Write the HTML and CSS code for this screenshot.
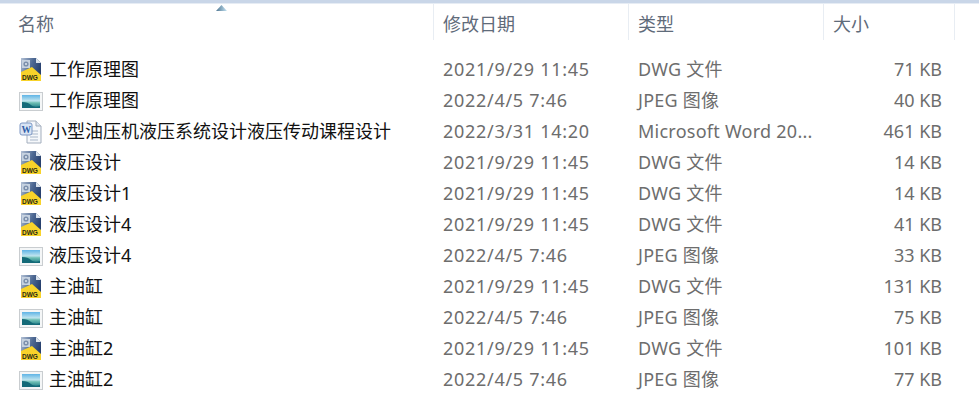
FILE: index.html
```html
<!DOCTYPE html>
<html lang="zh-CN">
<head>
  <meta charset="UTF-8" />
  <title>文件列表</title>
  <link rel="stylesheet" href="styles.css">
</head>
<body>
  <svg class="defs" width="0" height="0" aria-hidden="true">
    <defs>
      <linearGradient id="sky" x1="0" y1="0" x2="0" y2="1">
        <stop offset="0" stop-color="#5fb4e6"/>
        <stop offset="0.45" stop-color="#bfe4ee"/>
        <stop offset="0.6" stop-color="#6fc0b4"/>
        <stop offset="1" stop-color="#1c7a86"/>
      </linearGradient>
      <linearGradient id="steel" x1="0" y1="0" x2="1" y2="0.4">
        <stop offset="0" stop-color="#b4c2d6"/>
        <stop offset="0.55" stop-color="#4f6a94"/>
        <stop offset="1" stop-color="#27406e"/>
      </linearGradient>
      <linearGradient id="arrow" x1="0" y1="0" x2="1" y2="0">
        <stop offset="0" stop-color="#4e7590"/>
        <stop offset="1" stop-color="#c4e2f2"/>
      </linearGradient>
      <symbol id="dwg" viewBox="0 0 24 24">
        <path d="M2 0h15l5 5v18H2z" fill="url(#steel)"/>
        <path d="M17 0l5 5h-5z" fill="#dbe3ec"/>
        <rect x="3" y="2" width="8" height="8" fill="#c6d2e0"/>
        <circle cx="7" cy="6" r="2.6" fill="#7c90ac"/>
        <circle cx="7" cy="6" r="1" fill="#e1e8f0"/>
        <path d="M2 14l11-5 9 8v6H2z" fill="#f8d32a"/>
        <text x="3" y="22" class="dwg-label">DWG</text>
      </symbol>
      <symbol id="jpg" viewBox="0 0 24 24">
        <rect x="0.5" y="3.5" width="23" height="18" fill="#f4f6f7" stroke="#c9cdd0"/>
        <rect x="3" y="6" width="18" height="13" fill="url(#sky)"/>
        <path d="M3 13c4 0 7 1 9 3s6 2 9 1v2H3z" fill="#146a78"/>
      </symbol>
      <symbol id="doc" viewBox="0 0 24 24">
        <path d="M8 1h9l5 5v17H8z" fill="#f6f8fb" stroke="#a3aebd"/>
        <path d="M17 1v5h5" fill="#dfe6ef" stroke="#a3aebd"/>
        <path d="M11 11h8M11 14h8M11 17h8M11 20h8" stroke="#a9b7ca" stroke-width="1"/>
        <rect x="1" y="3" width="12" height="12" rx="2" fill="#d9e4f4" stroke="#7c97c4"/>
        <text x="2.4" y="12.5" class="doc-label">W</text>
      </symbol>
    </defs>
  </svg>

  <div class="explorer">
    <div class="topband"></div>

    <div class="head">
      <div class="col col-name">名称<svg class="sort" width="11" height="6"><path d="M5.5 0L11 6H0z" fill="url(#arrow)"/></svg></div>
      <div class="col col-date">修改日期</div>
      <div class="col col-type">类型</div>
      <div class="col col-size">大小</div>
      <div class="col col-rest"></div>
    </div>

    <div class="rows">
      <div class="row">
        <div class="name"><svg class="icon"><use href="#dwg"/></svg>工作原理图</div>
        <div class="date">2021/9/29 11:45</div><div class="type">DWG 文件</div><div class="size">71 KB</div>
      </div>
      <div class="row">
        <div class="name"><svg class="icon"><use href="#jpg"/></svg>工作原理图</div>
        <div class="date">2022/4/5 7:46</div><div class="type">JPEG 图像</div><div class="size">40 KB</div>
      </div>
      <div class="row">
        <div class="name"><svg class="icon"><use href="#doc"/></svg>小型油压机液压系统设计液压传动课程设计</div>
        <div class="date">2022/3/31 14:20</div><div class="type">Microsoft Word 20...</div><div class="size">461 KB</div>
      </div>
      <div class="row">
        <div class="name"><svg class="icon"><use href="#dwg"/></svg>液压设计</div>
        <div class="date">2021/9/29 11:45</div><div class="type">DWG 文件</div><div class="size">14 KB</div>
      </div>
      <div class="row">
        <div class="name"><svg class="icon"><use href="#dwg"/></svg>液压设计1</div>
        <div class="date">2021/9/29 11:45</div><div class="type">DWG 文件</div><div class="size">14 KB</div>
      </div>
      <div class="row">
        <div class="name"><svg class="icon"><use href="#dwg"/></svg>液压设计4</div>
        <div class="date">2021/9/29 11:45</div><div class="type">DWG 文件</div><div class="size">41 KB</div>
      </div>
      <div class="row">
        <div class="name"><svg class="icon"><use href="#jpg"/></svg>液压设计4</div>
        <div class="date">2022/4/5 7:46</div><div class="type">JPEG 图像</div><div class="size">33 KB</div>
      </div>
      <div class="row">
        <div class="name"><svg class="icon"><use href="#dwg"/></svg>主油缸</div>
        <div class="date">2021/9/29 11:45</div><div class="type">DWG 文件</div><div class="size">131 KB</div>
      </div>
      <div class="row">
        <div class="name"><svg class="icon"><use href="#jpg"/></svg>主油缸</div>
        <div class="date">2022/4/5 7:46</div><div class="type">JPEG 图像</div><div class="size">75 KB</div>
      </div>
      <div class="row">
        <div class="name"><svg class="icon"><use href="#dwg"/></svg>主油缸2</div>
        <div class="date">2021/9/29 11:45</div><div class="type">DWG 文件</div><div class="size">101 KB</div>
      </div>
      <div class="row">
        <div class="name"><svg class="icon"><use href="#jpg"/></svg>主油缸2</div>
        <div class="date">2022/4/5 7:46</div><div class="type">JPEG 图像</div><div class="size">77 KB</div>
      </div>
    </div>
  </div>
</body>
</html>
```

FILE: styles.css
```css
html, body {
  margin: 0;
  padding: 0;
  height: 100%;
  overflow: hidden;
  background: #fff;
}

body {
  font-family: "Noto Sans", "Noto Sans CJK SC", sans-serif;
  font-size: 18px;
  color: #6d6d6d;
}

.defs {
  display: block;
  height: 0;
}

.dwg-label {
  font-family: "Liberation Sans", sans-serif;
  font-size: 6.5px;
  font-weight: bold;
  fill: #2a2a14;
}

.doc-label {
  font-family: "Liberation Serif", serif;
  font-size: 9.5px;
  font-weight: bold;
  fill: #2f5ea8;
}

.topband {
  height: 4px;
  background: #c9d6e8;
  border-bottom: 1px solid #e6ecf4;
  box-sizing: border-box;
}

.head {
  display: grid;
  grid-template-columns: 434px 195px 195px 131px 1fr;
  height: 36px;
}

.col {
  position: relative;
  padding: 4px 0 0 9px;
  line-height: 32px;
  border-right: 1px solid #e8edf3;
  color: #5f6b7a;
}

.col-name {
  padding-left: 18px;
}

.col-rest {
  border-right: 0;
}

.sort {
  position: absolute;
  top: 1px;
  left: 216px;
}

.rows {
  padding-top: 14px;
}

.row {
  display: grid;
  grid-template-columns: 433px 195px 185px 129px;
  height: 31px;
  line-height: 31px;
  white-space: nowrap;
}

.name {
  display: flex;
  align-items: center;
  gap: 6px;
  padding-left: 19px;
  color: #111;
}

.icon {
  width: 24px;
  height: 24px;
  flex: none;
}

.date, .type {
  padding-left: 10px;
}

.date {
  letter-spacing: 0.7px;
}

.type {
  letter-spacing: 0.25px;
}

.size {
  text-align: right;
}
```
